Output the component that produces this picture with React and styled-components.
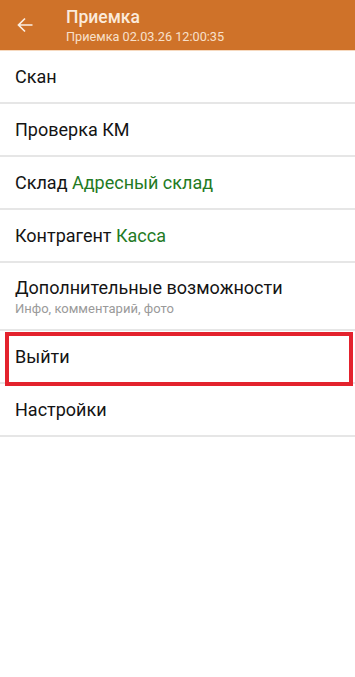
import styled, { createGlobalStyle } from "styled-components";

const GlobalStyle = createGlobalStyle`
  html, body {
    margin: 0;
    padding: 0;
    background: #ffffff;
    font-family: Roboto, "Noto Sans", sans-serif;
  }
`;

const Screen = styled.div`
  width: 355px;
  min-height: 677px;
  background: #ffffff;
`;

const Toolbar = styled.header`
  height: 50px;
  background: #cf7229;
  border-bottom: 1px solid #f6d9bf;
  display: flex;
  align-items: center;
`;

const BackButton = styled.button`
  width: 48px;
  height: 50px;
  padding: 0 0 0 1px;
  border: none;
  background: transparent;
  display: flex;
  align-items: center;
  justify-content: center;
  color: #fbeee2;
`;

const Titles = styled.div`
  margin-left: 18px;
  margin-top: 1px;
  display: flex;
  flex-direction: column;
`;

const Title = styled.div`
  font-size: 17.5px;
  font-weight: 500;
  color: #fbeadb;
  line-height: 21px;
`;

const Subtitle = styled.div`
  font-size: 12.7px;
  color: #f8e0cb;
  line-height: 17px;
`;

const Menu = styled.ul`
  list-style: none;
  margin: 0;
  padding: 0;
`;

const Item = styled.li`
  position: relative;
  min-height: ${(p) => (p.$tall ? 66 : 51)}px;
  padding: 0 15px;
  border-bottom: 2px solid #e6e6e6;
  display: flex;
  flex-direction: column;
  justify-content: center;
  font-size: 18px;
  color: #141414;
`;

const Value = styled.span`
  color: #237a23;
`;

const Hint = styled.div`
  font-size: 13px;
  color: #9a9a9a;
  margin-top: 3px;
`;

const Highlight = styled.div`
  position: absolute;
  left: 5px;
  right: 2px;
  top: 1px;
  bottom: -4px;
  border: 4px solid #e3222d;
  pointer-events: none;
`;

const items = [
  { label: "Скан" },
  { label: "Проверка КМ" },
  { label: "Склад", value: "Адресный склад" },
  { label: "Контрагент", value: "Касса" },
  { label: "Дополнительные возможности", hint: "Инфо, комментарий, фото" },
  { label: "Выйти", marked: true },
  { label: "Настройки" },
];

export default function App() {
  return (
    <Screen>
      <GlobalStyle />
      <Toolbar>
        <BackButton aria-label="Назад">
          <svg width="16" height="16" viewBox="0 0 16 16" fill="none">
            <path
              d="M15.5 8H1.5M8 1.5L1.5 8l6.5 6.5"
              stroke="currentColor"
              strokeWidth="1.7"
            />
          </svg>
        </BackButton>
        <Titles>
          <Title>Приемка</Title>
          <Subtitle>Приемка 02.03.26 12:00:35</Subtitle>
        </Titles>
      </Toolbar>
      <Menu>
        {items.map((it) => (
          <Item key={it.label} $tall={!!it.hint}>
            <div>
              {it.label}
              {it.value && <> <Value>{it.value}</Value></>}
            </div>
            {it.hint && <Hint>{it.hint}</Hint>}
            {it.marked && <Highlight />}
          </Item>
        ))}
      </Menu>
    </Screen>
  );
}
